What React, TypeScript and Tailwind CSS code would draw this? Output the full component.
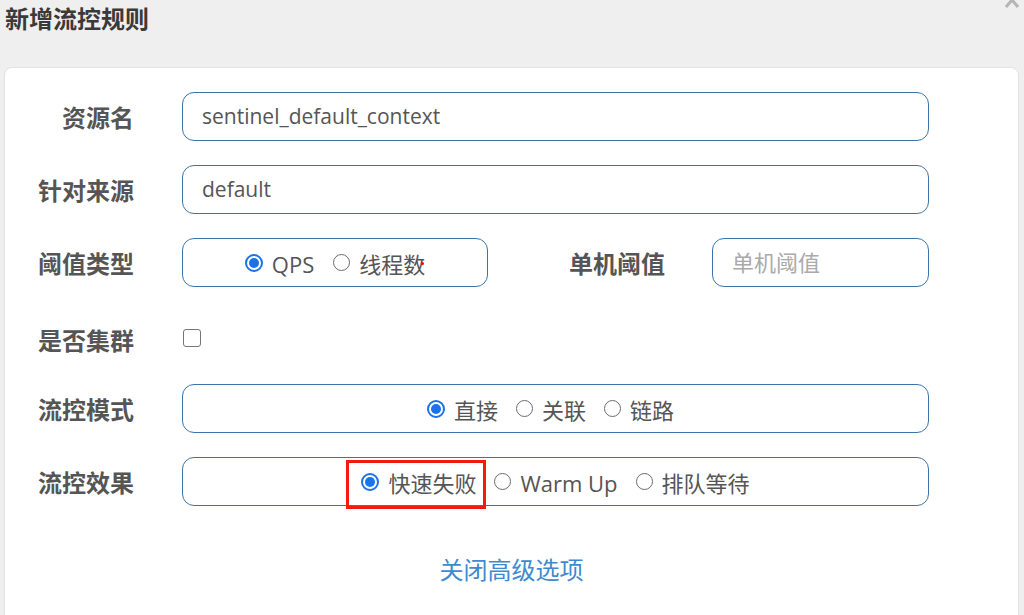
import React from 'react'

const font = { fontFamily: '"Open Sans", "Noto Sans CJK SC", sans-serif' }

function Radio({ checked, label }: { checked?: boolean; label: string }) {
  return (
    <span className="flex items-center gap-[9px]">
      {checked ? (
        <span className="w-[18px] h-[18px] rounded-full border-2 border-[#1a73e8] flex items-center justify-center">
          <span className="w-[10px] h-[10px] rounded-full bg-[#1a73e8]" />
        </span>
      ) : (
        <span className="w-[17px] h-[17px] rounded-full border-[1.5px] border-[#6b6b6b] bg-white" />
      )}
      <span className="text-[22px] leading-[30px] text-[#555] pt-[3px]">{label}</span>
    </span>
  )
}

function Label({ children }: { children: React.ReactNode }) {
  return (
    <div className="w-[129px] shrink-0 text-right text-[24px] leading-[32px] pt-[3px] font-bold text-[#555]">{children}</div>
  )
}

const box = 'h-[49px] rounded-[12px] border border-[#3b74a6] bg-white flex items-center'

export default function App() {
  return (
    <div className="w-[1024px] h-[615px] overflow-hidden bg-[#efefef] relative" style={font}>
      <svg className="absolute right-[5px] top-[-8px]" width="14" height="16" viewBox="0 0 14 16">
        <path d="M1 1 L13 15 M13 1 L1 15" stroke="#b5b5b5" strokeWidth="3" />
      </svg>

      <h1 className="pl-[5px] pt-[3px] h-[67px] text-[24px] leading-[32px] font-bold text-[#3a3a3a]">新增流控规则</h1>

      <div className="ml-[4px] mr-[5px] h-[560px] bg-white rounded-[8px] border border-[#e2e2e2] pt-[24px] pr-[89px]">
        <div className="flex flex-col gap-[24px]">
          <div className="flex items-center gap-[48px]">
            <Label>资源名</Label>
            <div className={`${box} flex-1 px-[19px] text-[21px] text-[#555]`}>sentinel_default_context</div>
          </div>

          <div className="flex items-center gap-[48px]">
            <Label>针对来源</Label>
            <div className={`${box} flex-1 px-[19px] text-[21px] text-[#555]`}>default</div>
          </div>

          <div className="flex items-center gap-[48px]">
            <Label>阈值类型</Label>
            <div className={`${box} w-[306px] justify-center gap-[19px]`}>
              <Radio checked label="QPS" />
              <span className="relative">
                <Radio label="线程数" />
                <span className="absolute right-[1px] top-[16px] w-[3px] h-[3px] rounded-full bg-[#f00]" />
              </span>
            </div>
            <div className="ml-[33px] text-[24px] leading-[32px] pt-[3px] font-bold text-[#555]">单机阈值</div>
            <div className={`${box} flex-1 ml-[-1px] px-[19px] text-[22px] text-[#aaa]`}>单机阈值</div>
          </div>

          <div className="flex items-center gap-[48px] h-[49px] pt-[8px]">
            <Label>是否集群</Label>
            <span className="w-[18px] h-[18px] rounded-[3px] border-[1.5px] border-[#767676] bg-white ml-[1px] mt-[-3px]" />
          </div>

          <div className="flex items-center gap-[48px]">
            <Label>流控模式</Label>
            <div className={`${box} flex-1 justify-center gap-[18px] pr-[10px]`}>
              <Radio checked label="直接" />
              <Radio label="关联" />
              <Radio label="链路" />
            </div>
          </div>

          <div className="flex items-center gap-[48px]">
            <Label>流控效果</Label>
            <div className={`${box} flex-1 justify-center gap-[18px]`}>
              <span className="relative">
                <Radio checked label="快速失败" />
                <span className="absolute left-[-15px] right-[-10px] top-[-5px] bottom-[-11px] border-[3px] border-[#f21b0e]" />
              </span>
              <Radio label="Warm Up" />
              <Radio label="排队等待" />
            </div>
          </div>
        </div>

        <div className="mt-[48px] pl-[89px] text-center text-[24px] leading-[32px] text-[#3d8ad0]">关闭高级选项</div>
      </div>
    </div>
  )
}
